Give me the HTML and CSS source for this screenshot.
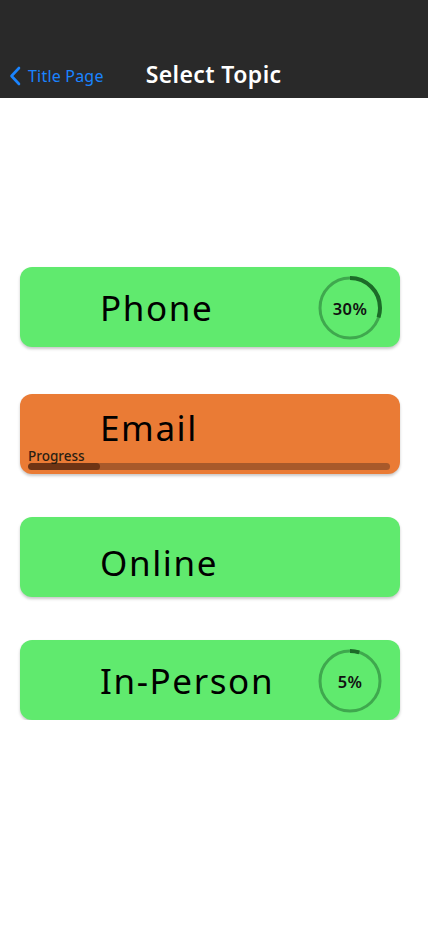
FILE: index.html
```html
<!DOCTYPE html>
<html>
<head>
<meta charset="utf-8">
<link rel="stylesheet" href="styles.css">
</head>
<body>
<header class="nav">
  <a class="back">
    <svg class="chev" width="12" height="20" viewBox="0 0 12 20"><path d="M10 2 L2.5 10 L10 18" fill="none" stroke="#1a84ff" stroke-width="2.6" stroke-linecap="round" stroke-linejoin="round"/></svg>
    <span>Title Page</span>
  </a>
  <h1 class="title">Select Topic</h1>
</header>
<main class="list">
  <div class="card green">
    <span class="label">Phone</span>
    <div class="ring">
      <svg width="66" height="66" viewBox="0 0 66 66">
        <circle cx="33" cy="33" r="30" fill="none" stroke="#3fa84e" stroke-width="3"/>
        <circle cx="33" cy="33" r="30" fill="none" stroke="#1c6b28" stroke-width="4" stroke-dasharray="56.5 200" transform="rotate(-90 33 33)"/>
      </svg>
      <span class="pct">30%</span>
    </div>
  </div>
  <div class="card orange email">
    <span class="label">Email</span>
    <div class="progress">
      <span class="plabel">Progress</span>
      <div class="track"><div class="fill" style="width:20%"></div></div>
    </div>
  </div>
  <div class="card green online">
    <span class="label">Online</span>
  </div>
  <div class="card green">
    <span class="label">In-Person</span>
    <div class="ring">
      <svg width="66" height="66" viewBox="0 0 66 66">
        <circle cx="33" cy="33" r="30" fill="none" stroke="#3fa84e" stroke-width="3"/>
        <circle cx="33" cy="33" r="30" fill="none" stroke="#1c6b28" stroke-width="4" stroke-dasharray="9.4 200" transform="rotate(-90 33 33)"/>
      </svg>
      <span class="pct">5%</span>
    </div>
  </div>
</main>
</body>
</html>
```
FILE: styles.css
```css
* { box-sizing: border-box; }
body {
  margin: 0;
  background: #ffffff;
  font-family: "Noto Sans", "DejaVu Sans", sans-serif;
}
.nav {
  height: 98px;
  background: #292929;
  display: flex;
  align-items: flex-end;
  padding: 0 0 12px 9px;
  position: relative;
}
.back {
  display: flex;
  align-items: center;
  gap: 7px;
  color: #1a84ff;
  font-size: 16px;
  line-height: 20px;
  font-family: "Noto Sans", sans-serif;
  letter-spacing: 0.2px;
}
.title {
  margin: 0;
  margin-left: 42px;
  color: #ffffff;
  font-size: 23px;
  font-weight: 600;
  line-height: 26px;
  letter-spacing: 0.4px;
  font-family: "Noto Sans", sans-serif;
  position: relative;
  top: 1px;
}
.list {
  display: flex;
  flex-direction: column;
  gap: 43px;
  padding: 169px 0 0 20px;
}
.card {
  width: 380px;
  height: 80px;
  border-radius: 12px;
  display: flex;
  align-items: center;
  justify-content: space-between;
  padding: 0 17px 0 80px;
  box-shadow: 0 2px 3px rgba(0,0,0,0.22);
  position: relative;
}
.green { background: #60ea6e; }
.orange { background: #ea7b35; }
.email { margin-top: 4px; align-items: flex-start; padding-top: 10px; }
.online { padding-top: 10px; }
.label {
  font-size: 35px;
  color: #000;
  font-family: "Noto Sans", sans-serif;
  letter-spacing: 1.6px;
}
.ring {
  width: 66px;
  height: 66px;
  position: relative;
  display: flex;
  align-items: center;
  justify-content: center;
  margin-top: 2px;
}
.ring svg { position: absolute; left: 0; top: 0; }
.pct {
  font-size: 16.5px;
  font-weight: 600;
  color: #111;
  letter-spacing: 0.4px;
}
.progress {
  position: absolute;
  left: 8px;
  right: 10px;
  bottom: 4px;
}
.plabel {
  display: block;
  font-size: 13.5px;
  line-height: 14px;
  color: #2b1e12;
  font-weight: 500;
}
.track {
  height: 7px;
  border-radius: 4px;
  background: #a8592a;
  overflow: hidden;
}
.fill {
  height: 100%;
  background: #6e3414;
  border-radius: 4px;
}
```
